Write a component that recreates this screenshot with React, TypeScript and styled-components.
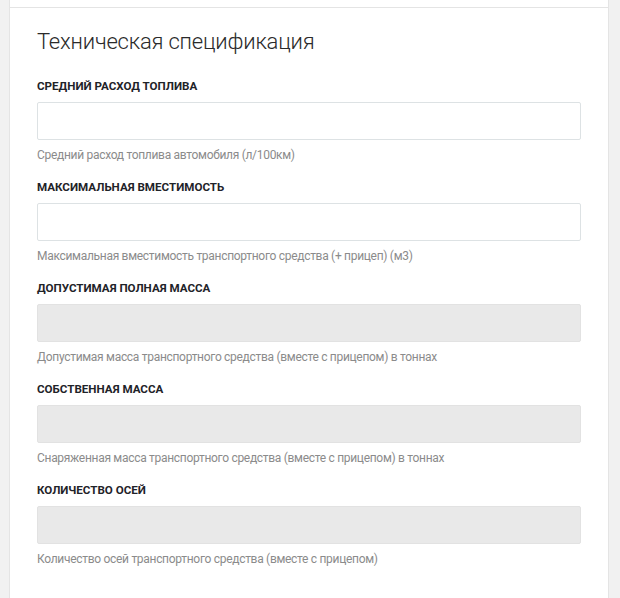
import styled, { createGlobalStyle } from 'styled-components';

const GlobalStyle = createGlobalStyle`
  html, body {
    margin: 0;
    padding: 0;
    background: #f1f1f1;
  }
  body {
    font-family: Roboto, "Liberation Sans", Arial, sans-serif;
    -webkit-font-smoothing: antialiased;
  }
`;

export const Page = styled.div`
  display: flex;
  flex-direction: column;
  width: 600px;
  min-height: 598px;
  margin-left: 9px;
`;

export const PrevCard = styled.div`
  height: 7px;
  background: #ffffff;
  border: 1px solid #e4e4e4;
  border-top: none;
`;

export const Card = styled.section`
  flex: 1;
  background: #ffffff;
  border-left: 1px solid #e4e4e4;
  border-right: 1px solid #e4e4e4;
  padding: 21px 27px 30px;
  display: flex;
  flex-direction: column;
`;

export const Title = styled.h2`
  margin: 0 0 24px;
  font-size: 22px;
  line-height: 26px;
  font-weight: 300;
  color: #2a2a2a;
  letter-spacing: -0.2px;
`;

export const Field = styled.div`
  display: flex;
  flex-direction: column;
  margin-bottom: 17px;
`;

export const Label = styled.label`
  font-size: 11.6px;
  line-height: 14px;
  font-weight: 700;
  color: #1f2329;
  text-transform: uppercase;
  letter-spacing: 0;
  margin: 0 0 9px;
`;

export const Input = styled.input<{ disabled?: boolean }>`
  box-sizing: border-box;
  width: 100%;
  height: 38px;
  border: 1px solid ${({ disabled }) => (disabled ? '#e2e2e2' : '#dde2e4')};
  border-radius: 2px;
  background: ${({ disabled }) => (disabled ? '#e9e9e9' : '#ffffff')};
  padding: 0 10px;
  font-family: inherit;
  font-size: 13px;
  outline: none;
`;

export const Hint = styled.div`
  margin-top: 7px;
  font-size: 12px;
  line-height: 16px;
  color: #8b8b8b;
  letter-spacing: -0.3px;
`;

type FieldData = {
  label: string;
  hint: string;
  disabled: boolean;
};

const fields: Array<FieldData> = [
  { label: 'Средний расход топлива', hint: 'Средний расход топлива автомобиля (л/100км)', disabled: false },
  { label: 'Максимальная вместимость', hint: 'Максимальная вместимость транспортного средства (+ прицеп) (м3)', disabled: false },
  { label: 'Допустимая полная масса', hint: 'Допустимая масса транспортного средства (вместе с прицепом) в тоннах', disabled: true },
  { label: 'Собственная масса', hint: 'Снаряженная масса транспортного средства (вместе с прицепом) в тоннах', disabled: true },
  { label: 'Количество осей', hint: 'Количество осей транспортного средства (вместе с прицепом)', disabled: true },
];

const App: React.FC = () => {
  return (
    <>
      <GlobalStyle />
      <Page>
        <PrevCard />
        <Card>
          <Title>Техническая спецификация</Title>
          {fields.map(field => (
            <Field key={field.label}>
              <Label>{field.label}</Label>
              <Input disabled={field.disabled} />
              <Hint>{field.hint}</Hint>
            </Field>
          ))}
        </Card>
      </Page>
    </>
  );
};

export default App;
